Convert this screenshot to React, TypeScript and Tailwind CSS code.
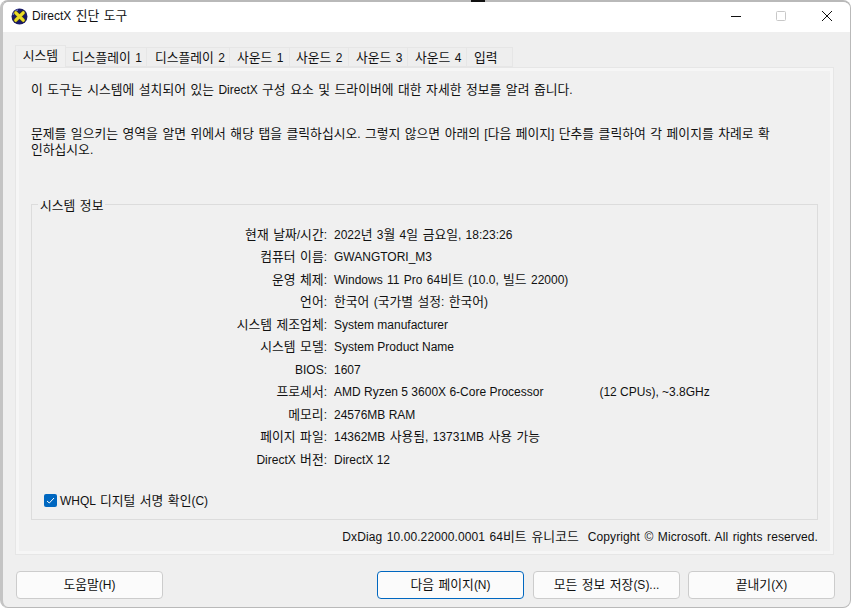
const infoRows = [
  ['현재 날짜/시간:', '2022년 3월 4일 금요일, 18:23:26'],
  ['컴퓨터 이름:', 'GWANGTORI_M3'],
  ['운영 체제:', 'Windows 11 Pro 64비트 (10.0, 빌드 22000)'],
  ['언어:', '한국어 (국가별 설정: 한국어)'],
  ['시스템 제조업체:', 'System manufacturer'],
  ['시스템 모델:', 'System Product Name'],
  ['BIOS:', '1607'],
  ['프로세서:', 'AMD Ryzen 5 3600X 6-Core Processor'],
  ['메모리:', '24576MB RAM'],
  ['페이지 파일:', '14362MB 사용됨, 13731MB 사용 가능'],
  ['DirectX 버전:', 'DirectX 12'],
];

const tabs = [
  ['디스플레이 1', 'w-[81px] pl-[6px]'],
  ['디스플레이 2', 'w-[83px] pl-[8px]'],
  ['사운드 1', 'w-[60px] pl-[7px]'],
  ['사운드 2', 'w-[59px] pl-[6px]'],
  ['사운드 3', 'w-[59px] pl-[7px]'],
  ['사운드 4', 'w-[59px] pl-[7px]'],
  ['입력', 'w-[46px] pl-[7px]'],
];

// hangul is set a little larger so it has the width of the original system font
function Ko({ children }: { children: string }) {
  const parts = children.split(/([\uac00-\ud7a3]+(?: [\uac00-\ud7a3]+)*)/);
  const spaced = parts.length > 1 ? '[word-spacing:1px]' : '';
  return (
    <span className={spaced}>
      {parts.map((p, i) =>
        i % 2 === 1 ? (
          <span key={i} className="text-[12.8px]">{p}</span>
        ) : (
          p
        ),
      )}
    </span>
  );
}

function DxIcon() {
  return (
    <svg width="17" height="17" viewBox="0 0 16 16">
      <circle cx="8" cy="8" r="7.5" fill="#1a1a66" />
      <path d="M2 6.5A6.3 6.3 0 0 1 6.5 1.8" stroke="#6f7fd8" strokeWidth="1.2" fill="none" />
      <path d="M4.5 4.5 L11.5 11.5 M11.5 4.5 L4.5 11.5" stroke="#3a3a20" strokeWidth="4.2" strokeLinecap="round" />
      <path d="M4.5 4.5 L11.5 11.5 M11.5 4.5 L4.5 11.5" stroke="#ecdc28" strokeWidth="3" strokeLinecap="round" />
    </svg>
  );
}

function Btn({ label, primary }: { label: string; primary?: boolean }) {
  return (
    <button
      className={
        primary
          ? 'w-[147px] h-[28px] rounded-[4px] bg-[#fbfbfb] border border-[#0067c0] text-[12px] text-[#111111]'
          : 'w-[147px] h-[28px] rounded-[4px] bg-[#fbfbfb] border border-[#cccccc] text-[12px] text-[#111111]'
      }
    >
      <Ko>{label}</Ko>
    </button>
  );
}

export default function App() {
  return (
    <div className="relative w-[851px] h-[609px] bg-white overflow-hidden font-['Liberation_Sans','Noto_Sans_CJK_KR',sans-serif] text-[12px] text-[#111111]">
      <div className="absolute top-0 left-[471px] w-[14px] h-[2px] bg-[#111111]" />
      <div className="h-[608px] flex flex-col rounded-[8px] bg-[#efefef] border border-[#b9b9b9] border-t-2 border-l-[3px] border-l-[#c4c4c4] overflow-hidden">
        <div className="h-[30px] shrink-0 bg-white flex items-center pl-[8px] pb-[2px] pr-px">
          <DxIcon />
          <span className="ml-[4px]"><Ko>DirectX 진단 도구</Ko></span>
          <div className="ml-auto flex items-center">
            <svg width="46" height="16" viewBox="0 0 46 16"><path d="M20 8.5h10" stroke="#111" /></svg>
            <svg width="46" height="16" viewBox="0 0 46 16"><rect x="19.5" y="3.5" width="9" height="9" rx="1" fill="none" stroke="#c8c8c8" /></svg>
            <svg width="46" height="16" viewBox="0 0 46 16"><path d="M19 3l10 10M29 3L19 13" stroke="#111" /></svg>
          </div>
        </div>
        <div className="pl-[12px] pr-[16px] pt-[13px] flex-1 flex flex-col">
          <div className="flex items-end h-[22px] relative z-10">
            <div className="w-[51px] h-[22px] pb-px flex items-center justify-center bg-[#f0f0f0] border border-b-0 border-[#e6e6e6]"><Ko>시스템</Ko></div>
            {tabs.map(([t, w]) => (
              <div key={t} className={`${w} h-[20px] pt-px flex items-center bg-[#eeeeee] border border-l-0 border-[#e6e6e6]`}><Ko>{t}</Ko></div>
            ))}
          </div>
          <div className="h-[488px] border border-[#e6e6e6]">
            <div className="h-full bg-[#f0f0f0] border-[3px] border-[#f6f6f6] pl-[12px] pr-[12px] pt-[11px]">
              <p className="leading-[16px]"><Ko>이 도구는 시스템에 설치되어 있는 DirectX 구성 요소 및 드라이버에 대한 자세한 정보를 알려 줍니다.</Ko></p>
              <p className="mt-[28px] leading-[16px] whitespace-nowrap">
                <Ko>문제를 일으키는 영역을 알면 위에서 해당 탭을 클릭하십시오. 그렇지 않으면 아래의 [다음 페이지] 단추를 클릭하여 각 페이지를 차례로 확</Ko>
                <br />
                <Ko>인하십시오.</Ko>
              </p>
              <div className="relative mt-[46px] h-[316px] border border-[#dcdcdc] pt-[18.3px]">
                <span className="absolute -top-[9px] left-[6px] bg-[#f0f0f0] px-[2px]"><Ko>시스템 정보</Ko></span>
                {infoRows.map(([k, v]) => (
                  <div key={k} className="flex h-[22.5px] items-center">
                    <span className="w-[295px] text-right"><Ko>{k}</Ko></span>
                    <span className="ml-[7px] whitespace-nowrap">
                      <Ko>{v}</Ko>
                      {k === '프로세서:' && <span className="ml-[56px]">(12 CPUs), ~3.8GHz</span>}
                    </span>
                  </div>
                ))}
                <label className="flex items-center mt-[20px] ml-[12px]">
                  <span className="w-[13px] h-[13px] rounded-[2px] bg-[#0067c0] flex items-center justify-center">
                    <svg width="9" height="9" viewBox="0 0 9 9"><path d="M1 5l2.3 2L8 2" stroke="#fff" fill="none" /></svg>
                  </span>
                  <span className="ml-[3px]"><Ko>WHQL 디지털 서명 확인(C)</Ko></span>
                </label>
              </div>
              <p className="text-right mt-[9px] leading-[16px] whitespace-pre tracking-[0.1px] [word-spacing:1px]"><Ko>DxDiag 10.00.22000.0001 64비트 유니코드</Ko>  Copyright © Microsoft. All rights reserved.</p>
            </div>
          </div>
          <div className="flex mt-[16px] pl-px">
            <Btn label="도움말(H)" />
            <div className="ml-auto flex gap-[9px] -mr-px">
              <Btn label="다음 페이지(N)" primary />
              <Btn label="모든 정보 저장(S)..." />
              <div className="-ml-px"><Btn label="끝내기(X)" /></div>
            </div>
          </div>
        </div>
      </div>
    </div>
  );
}
